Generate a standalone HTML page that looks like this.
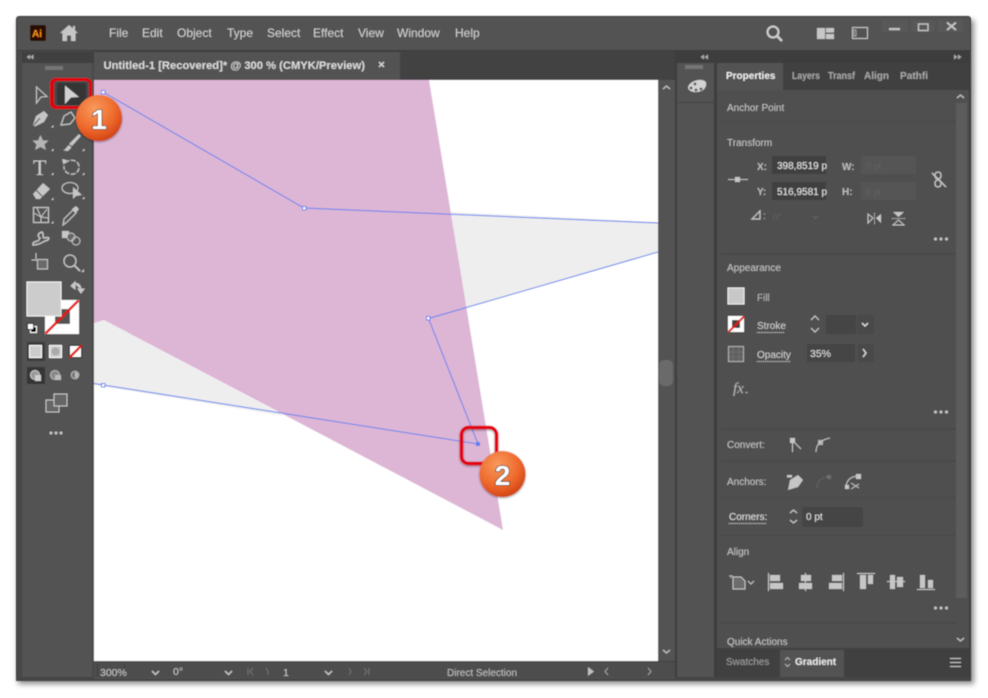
<!DOCTYPE html>
<html><head><meta charset="utf-8"><title>Illustrator</title>
<style>
html,body{margin:0;padding:0;background:#fff;width:988px;height:698px;overflow:hidden}
svg{display:block}
text{font-family:"Liberation Sans",sans-serif;font-size:11px;fill:#c8c8c8}
.m{font-size:12px;fill:#d0d0d0}
.l{font-size:10px;fill:#c4c4c4}
.ic{fill:#c6c6c6;stroke:none}
.st{fill:none;stroke:#c6c6c6;stroke-width:1.2}
</style></head><body>
<svg width="988" height="698" viewBox="0 0 988 698" xmlns="http://www.w3.org/2000/svg">
<defs>
<filter id="sh" x="-5%" y="-5%" width="110%" height="110%"><feGaussianBlur stdDeviation="3"/></filter>
<filter id="b" x="-5%" y="-5%" width="110%" height="110%"><feGaussianBlur stdDeviation="0.45"/></filter>
<filter id="b2" x="-20%" y="-20%" width="140%" height="140%"><feDropShadow dx="0" dy="1" stdDeviation="1" flood-color="#000" flood-opacity=".4"/></filter>
<radialGradient id="o" cx="40%" cy="30%" r="75%"><stop offset="0" stop-color="#f89a5c"/><stop offset=".6" stop-color="#ee6a2c"/><stop offset="1" stop-color="#cf3f12"/></radialGradient>
</defs>
<rect x="18" y="20" width="956" height="664" fill="#000" opacity=".45" filter="url(#sh)"/>
<g filter="url(#b)">
<rect x="16" y="16" width="955" height="665" rx="3" fill="#3a3a3a"/>
<!-- title bar -->
<rect x="17" y="17" width="953" height="33" fill="#535353"/>
<rect x="17" y="50" width="953" height="1" fill="#3e3e3e"/>
<rect x="30" y="25" width="16" height="16" rx="2" fill="#2c0a02"/>
<text x="32" y="37" style="font-size:10px;font-weight:bold;fill:#f58f1c">Ai</text>
<path class="ic" d="M60 33 L69 25 L73 28.5 V26 H75 V30.5 L78 33 H75.5 V41 H71 V35.5 H67 V41 H62.500 V33 Z"/>
<text class="m" x="109" y="37">File</text>
<text class="m" x="142" y="37">Edit</text>
<text class="m" x="177" y="37">Object</text>
<text class="m" x="227" y="37">Type</text>
<text class="m" x="267" y="37">Select</text>
<text class="m" x="313" y="37">Effect</text>
<text class="m" x="358" y="37">View</text>
<text class="m" x="397" y="37">Window</text>
<text class="m" x="455" y="37">Help</text>
<circle cx="773" cy="32" r="5.500" fill="none" stroke="#cfcfcf" stroke-width="2"/>
<path d="M777 36 L782 41" stroke="#cfcfcf" stroke-width="2.400"/>
<path class="ic" d="M817 28 H825 V39 H817 Z M826 28 H834 V32.500 H826 Z M826 34 H834 V39 H826 Z"/>
<rect x="852.500" y="27.500" width="15" height="11" fill="none" stroke="#c6c6c6"/>
<rect x="854" y="30" width="2" height="6" fill="none" stroke="#c6c6c6" stroke-width=".7"/>
<rect x="882" y="20" width="26" height="12" fill="#595959"/><rect x="911" y="20" width="24" height="12" fill="#595959"/><rect x="938" y="20" width="25" height="12" fill="#595959"/>
<rect x="889" y="28" width="11" height="2.200" fill="#c4c4c4"/>
<rect x="918.500" y="24" width="9.500" height="6.500" fill="none" stroke="#c4c4c4" stroke-width="1.400"/>
<path d="M947 22.500 L956 30 M956 22.500 L947 30" stroke="#c4c4c4" stroke-width="1.800"/>
<!-- tool panel -->
<rect x="17" y="51" width="77" height="630" fill="#4a4a4a"/>
<rect x="22" y="52" width="72" height="11" fill="#3f3f3f"/>
<path d="M30 54.500 L26.500 57 L30 59.500 Z M33.500 54.500 L30 57 L33.500 59.500 Z" fill="#aaa"/>
<rect x="22" y="63" width="70" height="618" fill="#535353"/>
<rect x="21" y="63" width="1" height="618" fill="#454545"/>
<rect x="45" y="66" width="18" height="4" fill="#8a8a8a" opacity=".6"/>
<!-- selected tool -->
<rect x="50" y="78" width="42" height="31" rx="6" fill="#e3000f"/>
<rect x="54" y="81" width="35" height="25" rx="3" fill="#4a4a4a"/>
<rect x="57" y="83" width="29" height="22" rx="2" fill="#363636"/>
<path d="M65 85.500 L79 97 L71 97.500 L65 104 Z" fill="#d2d2d2"/>
<path d="M36.500 87 L47 96.500 L41 97 L36.500 103 Z" fill="none" stroke="#c6c6c6" stroke-width="1.100"/>
<!-- tools -->
<path class="ic" d="M33 125 L36 116 L44 111 L48 115 L44 122 L35 126.500 Z"/>
<path d="M34 125 L40 118" stroke="#535353"/>
<path class="ic" d="M51 127.500 h2.500 v-2.500 z"/>
<path class="st" d="M61 125 L64 116 L71 112 L75 118 L70 124 Z"/>
<path class="ic" d="M40.500 135 L43 140.500 H48.500 L44.500 144.500 L46 150 L40.500 147 L35 150 L36.500 144.500 L32.500 140.500 H38 Z" opacity=".85"/>
<path class="ic" d="M51 151 h2.500 v-2.500 z M82 151 h2.500 v-2.500 z"/>
<path class="ic" d="M79 134 L81 136 L72 146 L69 144 Z M69 145 L71.500 147.500 L68 151 L63 150.500 C66 149.500 66 147 69 145 Z"/>
<text x="33" y="175" style="font-family:'Liberation Serif',serif;font-size:22px;fill:#d0d0d0">T</text>
<path class="ic" d="M51 175 h2.500 v-2.500 z M82 175 h2.500 v-2.500 z"/>
<path d="M65 163 C70 158 79 160 79 167 C79 172 75 175 70 174 C66 173 63.500 170 64 166" fill="none" stroke="#c6c6c6" stroke-width="1.300" stroke-dasharray="5 1.500"/>
<path class="ic" d="M62 159 L67 160 L63.500 165 Z"/>
<path class="ic" d="M33 194 L43 183 L50 189 L40 199 L36 199 Z"/>
<path d="M36 190 L43 197" stroke="#535353"/>
<path class="ic" d="M51 200 h2.500 v-2.500 z M82 199 h2.500 v-2.500 z"/>
<ellipse cx="70" cy="188" rx="8" ry="5.500" fill="none" stroke="#c6c6c6" stroke-width="1.100"/>
<path class="ic" d="M73 187 L82 195 L76 196 L73 199 Z"/>
<rect x="33.500" y="207.500" width="15" height="15" fill="none" stroke="#c6c6c6" stroke-width="1.200"/>
<path d="M34 213 L41 217 L47 209 M41 217 L41 222 M37 208 L41 217 M41 217 L48 218" stroke="#c6c6c6" stroke-width="1" fill="none"/>
<path class="ic" d="M51 223.500 h2.500 v-2.500 z"/>
<path class="st" d="M63 225 L64 219 L73 210 L76 213 L67 222 Z"/>
<path class="ic" d="M72 209 L76 206 L79 209 L76 213 Z"/>
<path d="M33 243 C36 240 38 243 40 238 C37 236 38 233 42 232 C45 236 41 238 45 238 C50 236 50 240 45 241 C41 243 38 245 33 245 Z" fill="none" stroke="#c6c6c6" stroke-width="1.500"/>
<rect x="62" y="231" width="7" height="7" fill="#c6c6c6"/>
<circle cx="71" cy="237" r="4" fill="#666" stroke="#c6c6c6"/>
<circle cx="76" cy="241" r="4" fill="none" stroke="#c6c6c6"/>
<path d="M31.500 260 H37 M36 253 V259" stroke="#c6c6c6" fill="none"/>
<rect x="37.500" y="259.500" width="10" height="9.500" fill="#6a6a6a" stroke="#c6c6c6"/>
<circle cx="70" cy="261" r="6" fill="none" stroke="#c6c6c6" stroke-width="1.300"/>
<path d="M74.500 265.500 L80 271" stroke="#c6c6c6" stroke-width="1.800"/>
<path class="ic" d="M81 272 h3 v-3 z"/>
<!-- colour -->
<rect x="45" y="300" width="34" height="34" fill="#fff"/>
<rect x="55" y="309" width="15" height="15" fill="#535353"/>
<path d="M45.500 333.500 L78.500 300.500" stroke="#e3120b" stroke-width="2.600"/>
<rect x="27" y="282" width="34" height="34" fill="#cccccc" stroke="#f2f2f2" stroke-width="1"/>
<path d="M74 283 C79 283 81 286 81 290 M71 286 L75 282 V289 Z M78 289 L84 289 L81 293 Z" fill="#c6c6c6" stroke="#c6c6c6" stroke-width="1"/>
<rect x="30.500" y="326.500" width="6" height="6" fill="#000" stroke="#fff"/>
<rect x="27.500" y="323.500" width="6" height="6" fill="#fff" stroke="#000"/>
<!-- mode buttons -->
<rect x="27" y="342" width="18" height="19" fill="#3a3a3a"/>
<rect x="29.500" y="345.500" width="12" height="12" fill="#cccccc" stroke="#fff"/>
<rect x="49.500" y="345.500" width="12" height="12" fill="#cccccc" stroke="#fff"/>
<circle cx="55.500" cy="351.500" r="4" fill="#aaa"/>
<rect x="69.500" y="345.500" width="12" height="12" fill="#fff" stroke="#111"/>
<path d="M69.500 357.500 L81.500 345.500" stroke="#e3120b" stroke-width="2.500"/>
<rect x="27" y="367" width="18" height="17" fill="#363636"/>
<circle cx="35" cy="375" r="4.500" fill="#999" stroke="#ccc"/><rect x="35" y="375" width="6" height="6" fill="#cfcfcf"/>
<circle cx="55" cy="375" r="4.500" fill="#888" stroke="#bbb"/><rect x="55" y="375" width="6" height="5" fill="#bbb"/>
<circle cx="75" cy="375" r="3.800" fill="#777" stroke="#bbb"/><path d="M75 372 a3 3 0 0 1 0 6 z" fill="#bbb"/>
<rect x="46" y="400" width="13" height="12" fill="#666" stroke="#c6c6c6"/>
<rect x="54" y="394" width="13" height="12" fill="#666" stroke="#c6c6c6"/>
<circle cx="51" cy="433" r="1.500" fill="#c6c6c6"/><circle cx="56" cy="433" r="1.500" fill="#c6c6c6"/><circle cx="61" cy="433" r="1.500" fill="#c6c6c6"/>
<!-- doc tab bar -->
<rect x="94" y="51" width="581" height="29" fill="#424242"/>
<rect x="94" y="52" width="306" height="28" fill="#525252"/>
<text x="103.500" y="69" style="font-size:11.200px;font-weight:bold;fill:#dcdcdc">Untitled-1 [Recovered]* @ 300 % (CMYK/Preview)</text>
<path d="M379 62 L384 67 M384 62 L379 67" stroke="#dcdcdc" stroke-width="1.300"/>
<!-- canvas -->
<rect x="94" y="80" width="564" height="581" fill="#fff"/>
<svg x="94" y="80" width="564" height="581" viewBox="94 80 564 581">
<path d="M94 323 L104 320 L285 416 L94 385 Z" fill="#eeeeee"/>
<path d="M451 212 L658 222 V252 L466 308 Z" fill="#eeeeee"/>
<path d="M94 80 H429 L503 530 L104 320 L94 323 Z" fill="#ddb6d5"/>
<g fill="none" stroke="#5b7ff0" stroke-width="1">
<path d="M103 92 L304 208 L658 223"/>
<path d="M658 252 L428.500 318.500 L478 444 L103 385 L94 383.500"/>
<g fill="#fff"><rect x="101.500" y="90.500" width="3.500" height="3.500"/><rect x="302.500" y="206.500" width="3.500" height="3.500"/><rect x="426.500" y="316.500" width="3.500" height="3.500"/><rect x="101.500" y="383.500" width="3.500" height="3.500"/></g>
</g>
<rect x="476" y="442" width="4" height="4" fill="#5b7ff0"/>
</svg>
<!-- callout 2 -->
<rect x="461.500" y="427.500" width="35" height="36" rx="7" fill="none" stroke="#e3000f" stroke-width="3.500" filter="url(#b2)"/>
<circle cx="502.500" cy="474" r="23" fill="url(#o)" filter="url(#b2)"/>
<text x="502.500" y="485" text-anchor="middle" style="font-size:28px;font-weight:bold;fill:#fff;stroke:#222;stroke-width:1.300px;paint-order:stroke">2</text>
<!-- callout 1 -->
<circle cx="99" cy="118" r="23" fill="url(#o)" filter="url(#b2)"/>
<text x="99" y="129" text-anchor="middle" style="font-size:28px;font-weight:bold;fill:#fff;stroke:#222;stroke-width:1.300px;paint-order:stroke">1</text>
<!-- v scrollbar -->
<rect x="658" y="80" width="17" height="581" fill="#535353"/>
<rect x="659" y="360" width="14" height="26" rx="5" fill="#6a6a6a"/>
<path d="M663 89 L666.500 86 L670 89" class="st" stroke-width="1"/>
<path d="M663 650 L666.500 653 L670 650" class="st" stroke-width="1"/>
<!-- status bar -->
<rect x="94" y="661" width="581" height="20" fill="#4e4e4e"/>
<rect x="94" y="661" width="581" height="1" fill="#3d3d3d"/>
<rect x="97" y="664" width="1" height="15" fill="#3c3c3c"/><rect x="124" y="664" width="1" height="15" fill="#3c3c3c"/>
<text x="100" y="676" style="font-size:10.500px">300%</text>
<path class="st" d="M152 671 L155.500 674.500 L159 671" style="stroke-width:1.500"/>
<text x="173" y="675" style="font-size:10.500px">0°</text>
<path class="st" d="M225 671 L228.500 674.500 L232 671" style="stroke-width:1.500"/>
<path d="M248 668 V675 M253 668 L250 671.500 L253 675 M266 668 L268 671.500 L268 675" stroke="#727272" fill="none"/>
<text x="283" y="676" style="font-size:10.500px">1</text>
<path class="st" d="M325 671 L328.500 674.500 L332 671" style="stroke-width:1.500"/>
<path d="M349 668 L351 671.500 L349 675 M364 668 L367 671.500 L364 675 M369 668 V675" stroke="#727272" fill="none"/>
<text x="447" y="676" style="font-size:10px;fill:#c0c0c0">Direct Selection</text>
<path d="M588 667 L594 671.500 L588 676 Z" fill="#c0c0c0"/>
<path d="M608 668 L605 671.500 L608 675 M648 668 L651 671.500 L648 675" stroke="#a0a0a0" fill="none"/>
<!-- dock -->
<rect x="675" y="51" width="296" height="630" fill="#3e3e3e"/>
<rect x="677" y="63" width="37" height="618" fill="#535353"/>
<rect x="677" y="102" width="37" height="1" fill="#404040"/>
<rect x="685" y="65" width="18" height="4" fill="#8a8a8a" opacity=".6"/>
<path d="M701 54.500 L704.500 57 L701 59.500 Z M705 54.500 L708.500 57 L705 59.500 Z" fill="#aaa" transform="rotate(180 704.500 57)"/>
<path d="M954 54.500 L957.500 57 L954 59.500 Z M958 54.500 L961.500 57 L958 59.500 Z" fill="#aaa"/>
<path d="M688 88 C688 83 696 79 702 80 C707 81 707 84 705 88 C702 93 690 94 688 88 Z" fill="#d2d2d2"/>
<circle cx="695" cy="84" r="1.400" fill="#535353"/><circle cx="691" cy="88" r="1.400" fill="#535353"/><circle cx="696" cy="90" r="1.400" fill="#535353"/><circle cx="701" cy="89" r="1.400" fill="#535353"/>
<!-- panel -->
<rect x="717" y="63" width="252" height="27" fill="#404040"/>
<rect x="717" y="63" width="66" height="27" fill="#535353"/>
<rect x="717" y="90" width="252" height="562" fill="#505050"/>
<text x="726" y="79" style="font-size:10px;font-weight:bold;fill:#f0f0f0">Properties</text>
<text x="792" y="79" style="font-size:10px;fill:#a8a8a8;font-weight:bold" textLength="28" lengthAdjust="spacingAndGlyphs">Layers</text>
<text x="828" y="79" style="font-size:10px;fill:#a8a8a8;font-weight:bold" textLength="27" lengthAdjust="spacingAndGlyphs">Transf</text>
<text x="864" y="79" style="font-size:10px;fill:#a8a8a8;font-weight:bold">Align</text>
<text x="900" y="79" style="font-size:10px;fill:#a8a8a8;font-weight:bold" textLength="28" lengthAdjust="spacingAndGlyphs">Pathfi</text>
<!-- panel scrollbar -->
<rect x="956" y="90" width="13" height="562" fill="#505050"/>
<rect x="956" y="103" width="11" height="495" fill="#5c5c5c"/>
<path d="M957 98 L960.500 95 L964 98" class="st" stroke-width="1"/>
<path d="M957 638 L960.500 641 L964 638" class="st" stroke-width="1"/>
<g fill="#484848">
<rect x="720" y="121" width="236" height="1"/><rect x="720" y="253" width="236" height="2"/><rect x="720" y="428" width="236" height="2"/><rect x="720" y="460" width="236" height="2"/><rect x="720" y="497" width="236" height="1"/><rect x="720" y="535" width="236" height="1"/><rect x="720" y="622" width="236" height="2"/>
</g>
<text class="l" x="727" y="111">Anchor Point</text>
<text class="l" x="727" y="146">Transform</text>
<text x="757" y="170" style="font-size:10px;font-weight:bold;fill:#bbb">X:</text>
<text x="757" y="195" style="font-size:10px;font-weight:bold;fill:#bbb">Y:</text>
<rect x="772" y="156" width="54" height="18" fill="#404040"/><rect x="772" y="182" width="54" height="18" fill="#404040"/>
<text x="777" y="169" style="font-size:10px;fill:#e8e8e8">398,8519 p</text>
<text x="777" y="195" style="font-size:10px;fill:#e8e8e8">516,9581 p</text>
<rect x="728" y="179" width="20" height="1" fill="#bbb"/><rect x="735" y="177" width="5" height="5" fill="#c6c6c6"/>
<text x="842" y="170" style="font-size:10px;font-weight:bold;fill:#bbb">W:</text>
<text x="842" y="195" style="font-size:10px;font-weight:bold;fill:#bbb">H:</text>
<rect x="861" y="156" width="55" height="18" fill="#555"/><rect x="861" y="182" width="55" height="18" fill="#555"/>
<text x="866" y="169" style="font-size:9px;fill:#636363">0 pt</text>
<text x="866" y="195" style="font-size:9px;fill:#636363">0 pt</text>
<path d="M932 173 L946 187" stroke="#c6c6c6" stroke-width="1.300"/>
<rect x="935" y="172" width="6" height="7" rx="3" fill="none" stroke="#c6c6c6" stroke-width="1.300"/><rect x="935" y="180" width="6" height="7" rx="3" fill="none" stroke="#c6c6c6" stroke-width="1.300"/>
<path d="M752 219 L760 211 V219 Z" fill="none" stroke="#c6c6c6" stroke-width="1.200"/>
<text x="763" y="219" style="font-size:10px;fill:#bbb">:</text>
<text x="773" y="220" style="font-size:9px;fill:#636363">0°</text>
<path d="M813 216 L815.500 218.500 L818 216" stroke="#666" fill="none"/>
<path d="M868 214 L873 218 L868 223 Z" fill="none" stroke="#c6c6c6"/><path d="M881 214 L876 218 L881 223 Z" fill="#c6c6c6"/><path d="M874.500 213 V224" stroke="#c6c6c6" stroke-dasharray="1 1"/>
<path d="M893 212 H904 L898.500 217 Z" fill="#c6c6c6"/><path d="M893 225 H904 L898.500 220 Z" fill="none" stroke="#c6c6c6"/><path d="M892 218.500 H905" stroke="#c6c6c6" stroke-dasharray="1 1"/>
<g fill="#c6c6c6"><circle cx="935.500" cy="239" r="1.500"/><circle cx="941" cy="239" r="1.500"/><circle cx="946.500" cy="239" r="1.500"/></g>
<text class="l" x="727" y="271">Appearance</text>
<rect x="728" y="288" width="16" height="16" fill="#c8c8c8" stroke="#f0f0f0" stroke-width="1"/>
<text x="757" y="301" style="font-size:10px;fill:#b8b8b8">Fill</text>
<rect x="728" y="316" width="16" height="16" fill="#fff"/><rect x="732" y="320" width="8" height="8" fill="#404040"/>
<path d="M728.500 332 L744 316.500" stroke="#e3120b" stroke-width="2"/>
<text x="757" y="329" style="font-size:10px;fill:#d0d0d0">Stroke</text>
<path d="M757 332.500 H784" stroke="#ccc" stroke-dasharray="1 1"/>
<path d="M811 320 L815 316 L819 320 M811 328 L815 332 L819 328" class="st"/>
<rect x="826" y="315" width="30" height="19" fill="#444"/><rect x="857" y="315" width="17" height="19" fill="#484848"/>
<path d="M862 323 L865 326 L868 323" stroke="#ddd" stroke-width="1.400" fill="none"/>
<rect x="728.500" y="346.500" width="15" height="15" fill="#5e5e5e" stroke="#b0b0b0"/>
<path d="M733 347 V361 M739 347 V361 M729 352 H743 M729 357 H743" stroke="#6e6e6e"/>
<text x="757" y="358" style="font-size:10px;fill:#d0d0d0">Opacity</text>
<path d="M757 361.500 H790" stroke="#ccc" stroke-dasharray="1 1"/>
<rect x="807" y="344" width="48" height="18" fill="#444"/><rect x="858" y="344" width="16" height="18" fill="#484848"/>
<text x="810" y="357" style="font-size:10.500px;fill:#e0e0e0">35%</text>
<path d="M863 349 L866 353 L863 357" stroke="#ddd" stroke-width="1.400" fill="none"/>
<text x="733" y="393" style="font-family:'Liberation Serif',serif;font-style:italic;font-size:15px;fill:#b8b8b8">fx</text>
<path d="M745 392 h3 l-1.500 1.500 z" fill="#b8b8b8"/>
<g fill="#c6c6c6"><circle cx="935.500" cy="412" r="1.500"/><circle cx="941" cy="412" r="1.500"/><circle cx="946.500" cy="412" r="1.500"/></g>
<text class="l" x="727" y="448">Convert:</text>
<rect x="790" y="438" width="5" height="5" fill="#c6c6c6"/><path d="M792.500 441 V452 M793 441 L801 449" stroke="#c6c6c6" fill="none"/>
<rect x="818" y="440" width="5" height="5" fill="#b0b0b0"/><path d="M816 452 C816 445 820 440 830 438" stroke="#c6c6c6" fill="none"/>
<text class="l" x="727" y="485">Anchors:</text>
<path class="ic" d="M788 490 L790 480 L798 475 L803 480 L798 487 Z"/>
<rect x="787" y="475" width="5" height="2.500" fill="#c6c6c6"/>
<path d="M817 488 C817 482 820 478 830 476" stroke="#6a6a6a" fill="none" stroke-dasharray="2 1"/>
<rect x="827" y="475" width="4" height="4" fill="#6e6e6e"/>
<path d="M846 488 C846 481 850 477 857 476" stroke="#c6c6c6" fill="none"/><rect x="856" y="474" width="5" height="5" fill="#c6c6c6"/><rect x="845" y="485" width="4" height="4" fill="#c6c6c6"/>
<path d="M851 483 L859 488 M851 489 L859 484" stroke="#c6c6c6"/>
<text x="729" y="520" style="font-size:10px;fill:#e0e0e0">Corners:</text>
<path d="M729 523.500 H767" stroke="#ccc" stroke-dasharray="1 1"/>
<path d="M790 513 L793.500 510 L797 513 M790 520 L793.500 523 L797 520" class="st"/>
<rect x="802" y="507" width="61" height="20" rx="2" fill="#444"/>
<text x="806" y="520" style="font-size:10px;fill:#e0e0e0">0 pt</text>
<text class="l" x="727" y="555">Align</text>
<path d="M733 577 H741 L745 581 V589 H733 Z" fill="#6c6c6c" stroke="#c6c6c6"/>
<path d="M731 575 V578 M729 576 H733" stroke="#c6c6c6" stroke-width=".8"/>
<path d="M748 581 L751 584 L754 581" stroke="#c6c6c6" fill="none"/>
<g fill="#c6c6c6">
<rect x="768" y="573" width="1" height="18"/><rect x="770" y="575" width="10" height="6"/><rect x="770" y="583" width="13" height="6"/>
<rect x="805" y="573" width="1" height="18"/><rect x="801" y="575" width="10" height="6"/><rect x="799" y="583" width="13" height="6"/>
<rect x="843" y="573" width="1" height="18"/><rect x="832" y="575" width="10" height="6"/><rect x="829" y="583" width="13" height="6"/>
<rect x="857" y="573" width="18" height="1"/><rect x="860" y="575" width="6" height="14"/><rect x="868" y="575" width="5" height="9"/>
<rect x="887" y="581" width="18" height="1"/><rect x="890" y="575" width="5" height="14"/><rect x="897" y="577" width="6" height="10"/>
<rect x="917" y="589" width="18" height="1"/><rect x="920" y="575" width="5" height="13"/><rect x="928" y="580" width="5" height="8"/>
<circle cx="935.500" cy="608" r="1.500"/><circle cx="941" cy="608" r="1.500"/><circle cx="946.500" cy="608" r="1.500"/>
</g>
<text class="l" x="727" y="645">Quick Actions</text>
<!-- bottom tabs -->
<rect x="717" y="648" width="252" height="29" fill="#414141"/>
<rect x="780" y="650" width="64" height="27" fill="#535353"/>
<text x="726" y="665" style="font-size:10px;fill:#a0a0a0">Swatches</text>
<path d="M785 660 L787.500 657.500 L790 660 M785 664 L787.500 666.500 L790 664" stroke="#b0b0b0" fill="none"/>
<text x="795" y="665" style="font-size:10px;font-weight:bold;fill:#ececec">Gradient</text>
<path d="M950 658.500 H961 M950 662.500 H961 M950 666.500 H961" stroke="#c6c6c6"/>
<rect x="16" y="677" width="955" height="4" fill="#454545"/>
<rect x="94" y="677" width="581" height="2" fill="#505050"/>
</g>
</svg>
</body></html>
